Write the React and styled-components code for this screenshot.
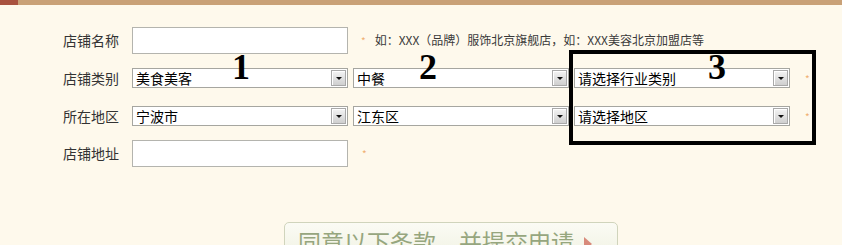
import React from 'react';
import styled, { createGlobalStyle } from 'styled-components';

const GlobalStyle = createGlobalStyle`
  html, body {
    margin: 0;
    padding: 0;
    background: #fef9ec;
  }
  body {
    font-family: "Noto Sans CJK SC", "Noto Sans", sans-serif;
    color: #333;
  }
`

const Page = styled.div`
  position: relative;
  width: 842px;
  height: 245px;
  overflow: hidden;
  background: #fef9ec;
`
const TopBar = styled.div`
  display: flex;
  height: 5px;
  background: #c9a177;
`
const TopTab = styled.div`
  width: 18px;
  background: #a9523f;
`
const Form = styled.div`
  padding-top: 16px;
`
const Row = styled.div`
  display: flex;
  align-items: center;
  height: ${props => props.h ? props.h : 38}px;
`
const Label = styled.div`
  width: 132px;
  padding-left: 63px;
  box-sizing: border-box;
  font-size: 14px;
  line-height: 1;
  color: #333;
  white-space: nowrap;
`
const TextInput = styled.input`
  width: 216px;
  height: 27px;
  box-sizing: border-box;
  border: 1px solid #b4b4ae;
  background: #fff;
  outline: none;
  margin: 0;
`
const Selects = styled.div`
  display: flex;
  gap: 5px;
`
const SelectBox = styled.div`
  display: flex;
  align-items: center;
  justify-content: space-between;
  width: 216px;
  height: 20px;
  box-sizing: border-box;
  border: 1px solid #a6a6a0;
  background: #fff;
  padding: 0 1px 0 3px;
`
const SelectText = styled.span`
  font-size: 14px;
  line-height: 1;
  color: #000;
`
const ArrowBtn = styled.span`
  display: flex;
  align-items: center;
  justify-content: center;
  width: 15px;
  height: 16px;
  box-sizing: border-box;
  border: 1px solid #a9a9a9;
  box-shadow: inset 1px 1px 0 #fff;
  background: linear-gradient(#f4f4f4, #cfcfcf);

  &::after {
    content: '';
    border-left: 3px solid transparent;
    border-right: 3px solid transparent;
    border-top: 3px solid #111;
  }
`
const Star = styled.span`
  margin-left: ${props => props.left ? props.left : 14}px;
  font-size: 10px;
  color: #f0b070;
`
const Hint = styled.span`
  margin-left: 9px;
  font-size: 12px;
  line-height: 1;
  color: #3a3a3a;
  white-space: nowrap;
`
const SubmitButton = styled.button`
  display: flex;
  align-items: flex-start;
  margin: 51px 0 0 284px;
  width: 334px;
  height: 44px;
  padding: 7px 0 0 13px;
  box-sizing: border-box;
  border: 1px solid #d0d4bc;
  border-radius: 5px;
  background: linear-gradient(#fbfbf4, #eef0df);
  font-family: "Noto Sans CJK SC", sans-serif;
  font-size: 23px;
  line-height: 1;
  color: #96a67e;
  cursor: pointer;
`
const Arrow = styled.span`
  margin: 7px 0 0 10px;
  border-left: 8px solid #d88a7b;
  border-top: 7px solid transparent;
  border-bottom: 7px solid transparent;
`
const Mark = styled.div`
  position: absolute;
  top: 49px;
  left: ${props => props.x}px;
  font-family: "Liberation Serif", "Times New Roman", serif;
  font-weight: bold;
  font-size: 36px;
  line-height: 1;
  color: #000;
`
const Frame = styled.div`
  position: absolute;
  left: 569px;
  top: 50px;
  width: 247px;
  height: 95px;
  box-sizing: border-box;
  border: 4px solid #000;
`

const Select = ({ value }) => (
  <SelectBox>
    <SelectText>{value}</SelectText>
    <ArrowBtn />
  </SelectBox>
)

export default function App() {
  return (
    <Page>
      <GlobalStyle />
      <TopBar>
        <TopTab />
      </TopBar>
      <Form>
        <Row>
          <Label>店铺名称</Label>
          <TextInput type="text" />
          <Star left="13">*</Star>
          <Hint>如：XXX（品牌）服饰北京旗舰店，如：XXX美容北京加盟店等</Hint>
        </Row>
        <Row>
          <Label>店铺类别</Label>
          <Selects>
            <Select value="美食美客" />
            <Select value="中餐" />
            <Select value="请选择行业类别" />
          </Selects>
          <Star left="15">*</Star>
        </Row>
        <Row>
          <Label>所在地区</Label>
          <Selects>
            <Select value="宁波市" />
            <Select value="江东区" />
            <Select value="请选择地区" />
          </Selects>
          <Star left="15">*</Star>
        </Row>
        <Row h="36">
          <Label>店铺地址</Label>
          <TextInput type="text" />
          <Star>*</Star>
        </Row>
      </Form>
      <SubmitButton type="button">
        同意以下条款，并提交申请
        <Arrow />
      </SubmitButton>
      <Frame />
      <Mark x={232}>1</Mark>
      <Mark x={419}>2</Mark>
      <Mark x={708}>3</Mark>
    </Page>
  );
}
